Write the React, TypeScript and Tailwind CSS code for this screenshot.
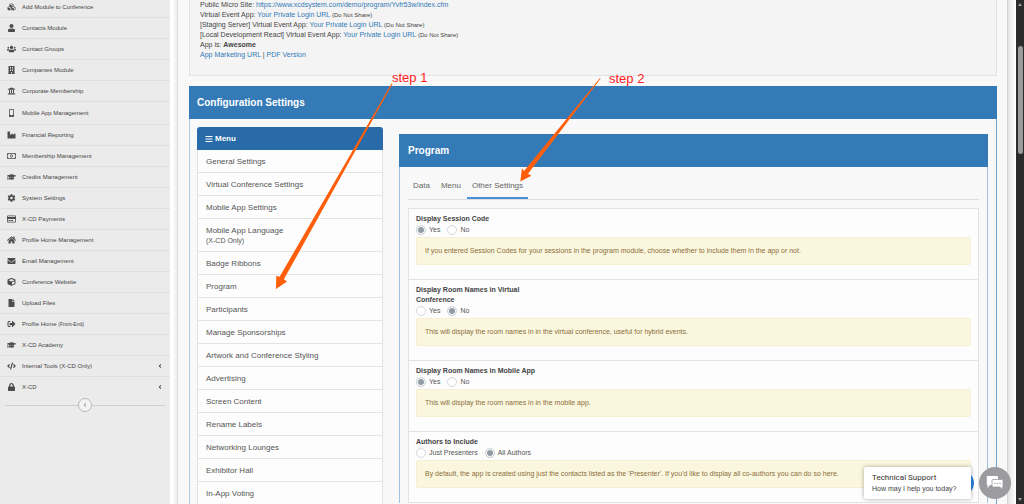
import React, { useState } from 'react';
import type { IconType } from 'react-icons';
import {
  FaAngleLeft,
  FaBars,
  FaBuilding,
  FaCode,
  FaCog,
  FaCube,
  FaCubes,
  FaEnvelope,
  FaFile,
  FaGraduationCap,
  FaHome,
  FaIndustry,
  FaLock,
  FaMobileAlt,
  FaRegCreditCard,
  FaRegMoneyBillAlt,
  FaSignOutAlt,
  FaUniversity,
  FaUser,
  FaUsers,
} from 'react-icons/fa';

interface NavItem {
  icon: IconType;
  label: string;
  note?: string;
  expandable?: boolean;
  tall?: boolean;
}

const navItems: NavItem[] = [
  { icon: FaCubes, label: 'Add Module to Conference' },
  { icon: FaUser, label: 'Contacts Module' },
  { icon: FaUsers, label: 'Contact Groups' },
  { icon: FaBuilding, label: 'Companies Module' },
  { icon: FaUniversity, label: 'Corporate Membership' },
  { icon: FaMobileAlt, label: 'Mobile App Management', tall: true },
  { icon: FaIndustry, label: 'Financial Reporting' },
  { icon: FaRegMoneyBillAlt, label: 'Membership Management' },
  { icon: FaGraduationCap, label: 'Credits Management' },
  { icon: FaCog, label: 'System Settings' },
  { icon: FaRegCreditCard, label: 'X-CD Payments' },
  { icon: FaHome, label: 'Profile Home Management' },
  { icon: FaEnvelope, label: 'Email Management' },
  { icon: FaCube, label: 'Conference Website' },
  { icon: FaFile, label: 'Upload Files' },
  { icon: FaSignOutAlt, label: 'Profile Home', note: '(Front-End)' },
  { icon: FaGraduationCap, label: 'X-CD Academy' },
  { icon: FaCode, label: 'Internal Tools (X-CD Only)', expandable: true },
  { icon: FaLock, label: 'X-CD', expandable: true },
];

const menuItems: { label: string; note?: string }[] = [
  { label: 'General Settings' },
  { label: 'Virtual Conference Settings' },
  { label: 'Mobile App Settings' },
  { label: 'Mobile App Language', note: '(X-CD Only)' },
  { label: 'Badge Ribbons' },
  { label: 'Program' },
  { label: 'Participants' },
  { label: 'Manage Sponsorships' },
  { label: 'Artwork and Conference Styling' },
  { label: 'Advertising' },
  { label: 'Screen Content' },
  { label: 'Rename Labels' },
  { label: 'Networking Lounges' },
  { label: 'Exhibitor Hall' },
  { label: 'In-App Voting' },
];

interface Setting {
  id: string;
  label: string;
  options: string[];
  value: string;
  help: string;
}

const settings: Setting[] = [
  {
    id: 'session-code',
    label: 'Display Session Code',
    options: ['Yes', 'No'],
    value: 'Yes',
    help: 'If you entered Session Codes for your sessions in the program module, choose whether to include them in the app or not.',
  },
  {
    id: 'rooms-virtual',
    label: 'Display Room Names in Virtual Conference',
    options: ['Yes', 'No'],
    value: 'No',
    help: 'This will display the room names in in the virtual conference, useful for hybrid events.',
  },
  {
    id: 'rooms-mobile',
    label: 'Display Room Names in Mobile App',
    options: ['Yes', 'No'],
    value: 'Yes',
    help: 'This will display the room names in in the mobile app.',
  },
  {
    id: 'authors',
    label: 'Authors to Include',
    options: ['Just Presenters', 'All Authors'],
    value: 'All Authors',
    help: "By default, the app is created using just the contacts listed as the 'Presenter'. If you'd like to display all co-authors you can do so here.",
  },
];

const Sidebar: React.FC = () => (
  <aside className="w-[170px] shrink-0 bg-[#ebebeb] text-[6px] text-[#444]">
    <ul className="-mt-[3px]">
      {navItems.map(({ icon: Icon, label, note, expandable, tall }, i) => (
        <li key={label} className={i < navItems.length - 1 ? 'border-b border-[#dfdfdf]' : ''}>
          <a href="#" className={`flex items-center gap-1.5 pl-[7px] pr-[7px] ${tall ? 'h-[22px]' : 'h-5'}`}>
            <Icon className="h-2 w-[9px] shrink-0 text-[#4c4c4c]" />
            <span>
              {label} {note && <span className="text-[5px]">{note}</span>}
            </span>
            {expandable && <FaAngleLeft className="ml-auto size-1.5" />}
          </a>
        </li>
      ))}
    </ul>
    <div className="mx-[5px] mt-px flex items-center">
      <span className="h-px flex-1 bg-[#cfcfcf]" />
      <button
        aria-label="Collapse sidebar"
        className="flex size-[14px] items-center justify-center rounded-full border border-[#b8b8b8] bg-[#f3f3f3] text-[#999]"
      >
        <FaAngleLeft className="size-1.5" />
      </button>
      <span className="h-px flex-1 bg-[#cfcfcf]" />
    </div>
  </aside>
);

const LoginLink: React.FC<{ prefix: string }> = ({ prefix }) => (
  <p>
    {prefix} <a href="#" className="text-[#337ab7]">Your Private Login URL</a>{' '}
    <span className="text-[6px]">(Do Not Share)</span>
  </p>
);

const EventInfo: React.FC = () => (
  <section className="h-[76px] border-x border-b border-[#e3e3e3] bg-[#f4f4f4] pl-[10px] text-[7px] leading-[10px] text-[#444]">
    <p>
      Public Micro Site:{' '}
      <a href="#" className="text-[#337ab7]">https://www.xcdsystem.com/demo/program/Yvfr53w/index.cfm</a>
    </p>
    <LoginLink prefix="Virtual Event App:" />
    <LoginLink prefix="[Staging Server] Virtual Event App:" />
    <LoginLink prefix="[Local Development React] Virtual Event App:" />
    <p>App is: <b>Awesome</b></p>
    <p>
      <a href="#" className="text-[#337ab7]">App Marketing URL</a> |{' '}
      <a href="#" className="text-[#337ab7]">PDF Version</a>
    </p>
  </section>
);

const SettingsMenu: React.FC = () => (
  <nav className="w-[186px] shrink-0 text-[8px] text-[#555]">
    <h3 className="flex h-[23px] items-center gap-0.5 rounded-t-[3px] bg-[#286ba8] pl-2 font-bold text-white">
      <FaBars className="size-2" /> Menu
    </h3>
    <ul className="border-x border-[#e3e3e3] bg-[#fdfdfd]">
      {menuItems.map(({ label, note }) => (
        <li key={label} className="border-b border-[#e3e3e3]">
          <a href="#" className={`flex flex-col justify-center pl-2 leading-[11px] ${note ? 'h-8' : 'h-[22px]'}`}>
            {label}
            {note && <span className="text-[7px] leading-[9px]">{note}</span>}
          </a>
        </li>
      ))}
    </ul>
  </nav>
);

const SettingRow: React.FC<{ setting: Setting }> = ({ setting }) => {
  const [value, setValue] = useState(setting.value);

  return (
    <fieldset className="border-b border-[#e3e3e3] px-[7px] pt-[5px] pb-[14px] text-[7px] leading-[10px] text-[#555]">
      <legend className="float-left w-[120px] font-bold text-[#444]">{setting.label}</legend>
      <div className="clear-both flex gap-[7px]">
        {setting.options.map((option) => (
          <label key={option} className="flex h-[11px] items-center gap-[3px]">
            <input
              type="radio"
              name={setting.id}
              checked={value === option}
              onChange={() => setValue(option)}
              className="size-[10px] appearance-none rounded-full border border-[#d5d8dc] bg-white checked:bg-[#929ba5] checked:shadow-[inset_0_0_0_1px_#fff]"
            />
            {option}
          </label>
        ))}
      </div>
      <p className="mt-0.5 rounded-[2px] border border-[#f7efd2] bg-[#fbf7df] px-2 py-2 text-[#8a6d3b]">{setting.help}</p>
    </fieldset>
  );
};

const ProgramPanel: React.FC = () => {
  const [tab, setTab] = useState('Other Settings');

  return (
    <section className="min-w-0 flex-1 border-x border-[#9fc0de]">
      <h3 className="-mx-px flex h-[33px] items-center bg-[#337ab7] pl-[9px] text-[10px] font-bold text-white">Program</h3>
      <div className="px-2">
        <div role="tablist" className="mt-2 flex h-[25px] gap-px border-b border-[#dcdcdc] text-[8px] text-[#666]">
          {['Data', 'Menu', 'Other Settings'].map((name) => (
            <button
              key={name}
              role="tab"
              aria-selected={tab === name}
              onClick={() => setTab(name)}
              className={`border-b-2 px-[5px] ${tab === name ? 'border-[#4a90d9]' : 'border-transparent'}`}
            >
              {name}
            </button>
          ))}
        </div>
        <div className="mt-2 border-x border-t border-[#e3e3e3] bg-[#fdfdfd]">
          {settings.map((setting) => (
            <SettingRow key={setting.id} setting={setting} />
          ))}
        </div>
      </div>
    </section>
  );
};

// Arrows and step labels drawn over the page
const Annotations: React.FC = () => (
  <div className="pointer-events-none absolute inset-0 text-[13px] leading-4 text-[#f22]">
    <svg width="1024" height="504" viewBox="0 0 1024 504" fill="#ff5f0a" className="absolute top-0 left-0">
      <path d="M391.5 83.5 L392.5 84 L283.9 279.3 L287 281.4 L276 289 L276.3 275.7 L279.6 276.8 Z" />
      <path d="M600 78 L600.6 78.5 L528 173.8 L531.4 175.7 L520.3 181.5 L522 168.3 L524 171 Z" />
    </svg>
    <span className="absolute top-[70px] left-[392px]">step 1</span>
    <span className="absolute top-[71px] left-[609px]">step 2</span>
  </div>
);

const SupportChat: React.FC = () => (
  <div className="absolute right-[13px] bottom-[5px] flex items-center">
    <span className="absolute right-[37px] size-[24px] rounded-full bg-[#2f86dd]" />
    <div className="relative mr-2 w-[107px] rounded-[2px] bg-white py-[5px] pl-2 text-[#444] shadow-[0_0_4px_rgba(0,0,0,0.35)]">
      <p className="font-['Roboto',sans-serif] text-[8px] leading-3 text-[#333]">Technical Support</p>
      <p className="text-[7px] leading-[10px]">How may I help you today?</p>
    </div>
    <button aria-label="Open chat" className="flex size-8 items-center justify-center rounded-full bg-[#9c9ca0]">
      <svg viewBox="0 0 18 16" className="h-4 w-[18px]">
        <path d="M1.5 1 H11 Q12 1 12 2 V9 Q12 10 11 10 H4 L1.5 13 V10 Q0.8 10 0.8 9 V2 Q0.8 1 1.5 1 Z" fill="#fff" />
        <path d="M7 4.5 H16 Q17 4.5 17 5.5 V11 Q17 12 16.5 12 V15 L14 12 H7 Q6 12 6 11 V5.5 Q6 4.5 7 4.5 Z" fill="#fff" stroke="#9c9ca0" strokeWidth="0.8" />
        <path d="M8.4 7.8 H9.6 V9 H8.4 Z M10.9 7.8 H12.1 V9 H10.9 Z M13.4 7.8 H14.6 V9 H13.4 Z" fill="#9c9ca0" />
      </svg>
    </button>
  </div>
);

const Scrollbar: React.FC = () => (
  <div className="flex w-2 shrink-0 flex-col items-center bg-[#2b2b2b] py-[3px]">
    <svg viewBox="0 0 4 3" className="h-[3px] w-1" fill="#9b9b9b"><path d="M2 0 L4 3 H0 Z" /></svg>
    <span className="mt-10 h-[108px] w-[5px] rounded-full bg-[#9b9b9b]" />
    <svg viewBox="0 0 4 3" className="mt-auto h-[3px] w-1" fill="#9b9b9b"><path d="M2 3 L4 0 H0 Z" /></svg>
  </div>
);

const App: React.FC = () => (
  <div className="relative flex h-screen overflow-hidden bg-white font-['Liberation_Sans',Arial,sans-serif]">
    <Sidebar />
    <div className="w-2 shrink-0 border-r border-[#dedede] bg-linear-to-r from-white from-30% to-[#ededed]" />
    <main className="min-w-0 flex-1 bg-[repeating-conic-gradient(#f4f4f4_0_25%,#fdfdfd_0_50%)] bg-size-[2px_2px] pr-[10px] pl-[11px]">
      <EventInfo />
      <section className="mt-[10px] border-r border-l border-r-[#6fa1cf] border-l-[#b4cde5]">
        <h2 className="-mx-px flex h-[33px] items-center bg-[#337ab7] pl-2 text-[10px] font-bold text-white">
          Configuration Settings
        </h2>
        <div className="flex items-start gap-4 pt-2 pr-2 pl-[7px]">
          <SettingsMenu />
          <div className="flex min-w-0 flex-1 pt-[7px]">
            <ProgramPanel />
          </div>
        </div>
      </section>
    </main>
    <div className="w-[9px] shrink-0 border-l border-[#d4d4d4] bg-linear-to-r from-[#e4e4e4] to-white" />
    <Scrollbar />
    <Annotations />
    <SupportChat />
  </div>
);

export default App;
